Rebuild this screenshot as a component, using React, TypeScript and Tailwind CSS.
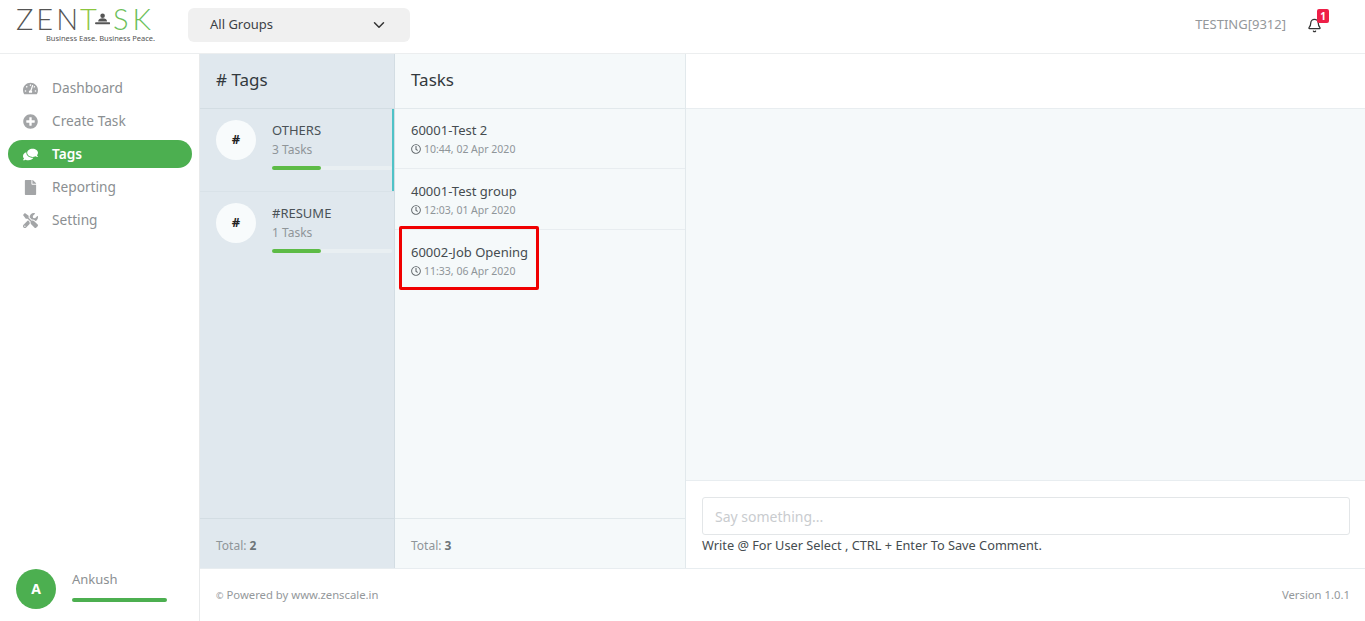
import { Bell, ChevronDown } from 'lucide-react';
import { FaComments, FaFile, FaPlusCircle, FaRegClock, FaTachometerAlt, FaTools } from 'react-icons/fa';

const navItems = [
  { label: 'Dashboard', icon: FaTachometerAlt },
  { label: 'Create Task', icon: FaPlusCircle },
  { label: 'Tags', icon: FaComments, active: true },
  { label: 'Reporting', icon: FaFile },
  { label: 'Setting', icon: FaTools },
];

const tags = [
  { name: 'OTHERS', count: '3 Tasks', selected: true },
  { name: '#RESUME', count: '1 Tasks' },
];

const tasks = [
  { title: '60001-Test 2', time: '10:44, 02 Apr 2020', rowClass: 'h-[60px] pt-[11px] border-b' },
  { title: '40001-Test group', time: '12:03, 01 Apr 2020', rowClass: 'h-[61px] pt-[12px] border-b' },
  { title: '60002-Job Opening', time: '11:33, 06 Apr 2020', rowClass: 'h-[61px] pt-[12px]', marked: true },
];

function Logo() {
  return (
    <div className="flex flex-col items-end w-[139px] ml-4 mr-px self-start mt-[4px]">
      <div className="flex items-center w-full h-[29px] text-[29px] leading-none font-['Lato',sans-serif] font-light text-[#555555]">
        <span className="tracking-[3px]">ZEN</span>
        <span className="text-[#8cc63f] -ml-px">T</span>
        <svg viewBox="0 0 24 18" className="w-6 h-[20px] -ml-[2px]">
          <circle cx="12" cy="4" r="3.6" fill="#555555" />
          <path d="M5 13c0-3.500 3-5 7-5s7 1.500 7 5z" fill="#555555" />
          <rect x="0" y="14" width="24" height="3.200" rx="1.600" fill="#555555" />
        </svg>
        <span className="text-[#6cbf5b] tracking-[4px] ml-[3px]">SK</span>
      </div>
      <div className="text-[7.500px] leading-[8px] mt-px text-[#555555] whitespace-nowrap">Business Ease. Business Peace.</div>
    </div>
  );
}

function Sidebar() {
  return (
    <aside className="w-[200px] shrink-0 border-r border-[#e8eaeb] flex flex-col">
      <nav className="flex-1 pt-[20px] pl-2 pr-[7px]">
        {navItems.map((item) => {
          const Icon = item.icon;
          return (
            <div
              key={item.label}
              className={`h-[28px] mb-[5px] rounded-full flex items-center pl-[14px] text-[13.700px] ${
                item.active ? 'bg-[#4caf50] text-white font-semibold' : 'text-[#8b8f92]'
              }`}
            >
              <span className="w-4 flex justify-center">
                <Icon className={`w-[15px] h-[15px] ${item.active ? 'text-white -scale-x-100' : 'text-[#a3a5a7]'}`} />
              </span>
              <span className="ml-[14px]">{item.label}</span>
            </div>
          );
        })}
      </nav>
      <div className="flex items-start px-4 pb-3">
        <div className="w-10 h-10 rounded-full bg-[#4caf50] flex items-center justify-center text-white text-sm font-bold">A</div>
        <div className="ml-4 w-[95px] mt-px">
          <div className="text-[13px] leading-[18px] text-[#8b8f92]">Ankush</div>
          <div className="h-1 mt-[10px] rounded-full bg-[#4caf50]"></div>
        </div>
      </div>
    </aside>
  );
}

function TagsColumn() {
  return (
    <section className="w-[195px] shrink-0 bg-[#e0e8ee] border-r border-[#d3dde3] flex flex-col">
      <div className="h-[55px] shrink-0 border-b border-[#d3dde3] flex items-center px-4 pb-[2px] text-[17px] text-[#33393d]"># Tags</div>
      <div className="flex-1">
        {tags.map((tag) => (
          <div key={tag.name} className={`relative h-[83px] pl-4 pt-[11px] flex ${tag.selected ? 'border-b border-[#d9e2e8]' : ''}`}>
            {tag.selected && <div className="absolute right-0 top-0 bottom-0 w-[2px] bg-[#4fc3c7]"></div>}
            <div className="w-10 h-10 rounded-full bg-[#f8fbfc] flex items-center justify-center text-[13px] font-bold text-[#222222]">#</div>
            <div className="ml-4 flex-1 min-w-0">
              <div className="text-[13px] leading-[20px] text-[#4a5257]">{tag.name}</div>
              <div className="text-xs leading-[20px] text-[#8f9599]">{tag.count}</div>
              <div className="h-1 mt-[6px] mr-[2px] bg-[#e9eff2] rounded-full">
                <div className="h-1 w-[49px] bg-[#5dbb46] rounded-full"></div>
              </div>
            </div>
          </div>
        ))}
      </div>
      <div className="h-[50px] shrink-0 border-t border-[#d3dde3] flex items-center px-4 pt-[4px] text-xs text-[#8f9599]">
        <span>Total: <b className="font-bold text-[#6d7478]">2</b></span>
      </div>
    </section>
  );
}

function TasksColumn() {
  return (
    <section className="w-[291px] shrink-0 bg-[#f5f9fa] border-r border-[#e2e9ec] flex flex-col">
      <div className="h-[55px] shrink-0 border-b border-[#e2e9ec] flex items-center px-4 pb-[2px] text-[17px] text-[#33393d]">Tasks</div>
      <div className="flex-1">
        {tasks.map((task) => (
          <div key={task.title} className={`relative border-[#e8edf0] pl-4 ${task.rowClass}`}>
            {task.marked && <div className="absolute left-[4px] top-[-4px] w-[140px] h-[64px] border-[3px] border-[#f00000] rounded-[2px]"></div>}
            <div className="text-[13px] leading-[20px] text-[#454c50]">{task.title}</div>
            <div className="flex items-center mt-px text-[10.500px] leading-[16px] text-[#8f9599]">
              <FaRegClock className="w-[10px] h-[10px] mr-[3px] text-[#666c70]" />
              {task.time}
            </div>
          </div>
        ))}
      </div>
      <div className="h-[50px] shrink-0 border-t border-[#e2e9ec] flex items-center px-4 pt-[4px] text-xs text-[#8f9599]">
        <span>Total: <b className="font-bold text-[#6d7478]">3</b></span>
      </div>
    </section>
  );
}

function CommentPane() {
  return (
    <section className="flex-1 flex flex-col min-w-0">
      <div className="h-[55px] shrink-0 border-b border-[#e8edf0]"></div>
      <div className="flex-1 bg-[#f5f9fa]"></div>
      <div className="h-[88px] shrink-0 border-t border-[#e8edf0] pt-4 pl-4 pr-[15px]">
        <input
          placeholder="Say something..."
          className="w-full h-[38px] px-3 border border-[#e3e6e8] rounded-[3px] text-sm outline-none placeholder:text-[#c9cccf]"
        />
        <div className="text-[12.750px] leading-[20px] text-[#454c50]">Write @ For User Select , CTRL + Enter To Save Comment.</div>
      </div>
    </section>
  );
}

export default function App() {
  return (
    <div className="h-screen flex flex-col bg-white overflow-hidden font-['Noto_Sans',sans-serif]">
      <header className="h-[54px] shrink-0 border-b border-[#eceeef] flex items-center pb-[3px]">
        <Logo />
        <div className="ml-8 w-[222px] h-[34px] bg-[#f0f0f0] rounded-md flex items-center justify-between px-[22px] text-[13px] text-[#3c4246]">
          All Groups
          <ChevronDown className="w-[18px] h-[18px] text-[#333333]" />
        </div>
        <div className="ml-auto text-[13px] text-[#94989b]">TESTING[9312]</div>
        <div className="relative ml-[21px] mr-[43px]">
          <Bell className="w-[15px] h-[15px] text-[#333333]" />
          <span className="absolute left-[10px] top-[-9px] w-3 h-[14px] rounded-[2px] bg-[#ee1f48] text-white text-[10px] leading-[14px] font-bold text-center">1</span>
        </div>
      </header>
      <div className="flex-1 flex min-h-0">
        <Sidebar />
        <main className="flex-1 flex flex-col min-w-0">
          <div className="flex-1 flex min-h-0 border-b border-[#e8edf0]">
            <TagsColumn />
            <TasksColumn />
            <CommentPane />
          </div>
          <footer className="h-[52px] shrink-0 flex items-center justify-between pl-4 pr-[15px] text-[11.300px] text-[#94989b]">
            <span><span className="text-[9px]">©</span> Powered by www.zenscale.in</span>
            <span>Version 1.0.1</span>
          </footer>
        </main>
      </div>
    </div>
  );
}
